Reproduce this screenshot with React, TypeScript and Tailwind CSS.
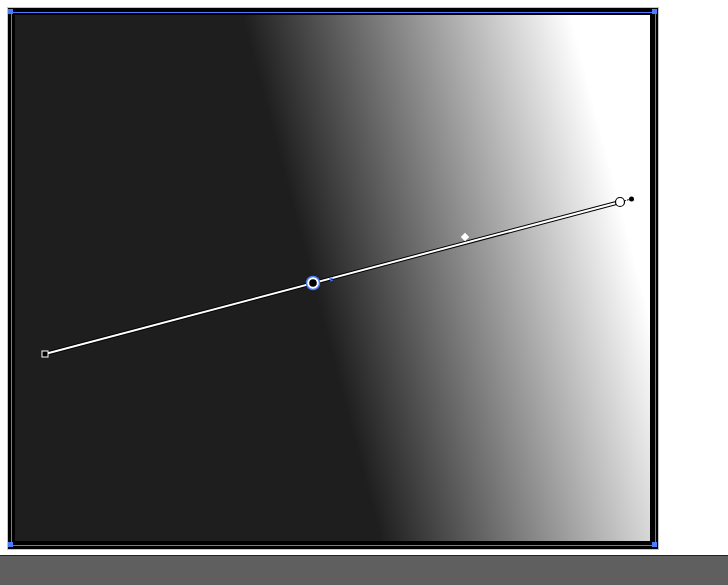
import React from "react";

// Gradient annotator overlay, drawn in page coordinates
const Annotator = () => (
    <svg className="absolute left-0 top-0 pointer-events-none" width={728} height={555} viewBox="0 0 728 555">
        <line x1={45} y1={354} x2={620} y2={202} stroke="#000" strokeWidth={4} />
        <line x1={45} y1={354} x2={620} y2={202} stroke="#fff" strokeWidth={2} />
        <rect x={42} y={351} width={6} height={6} fill="#000" stroke="#fff" strokeWidth={1} />
        <line x1={624} y1={201} x2={631} y2={199} stroke="#000" strokeWidth={1} strokeDasharray="2 1" />
        <circle cx={631.5} cy={199} r={2.5} fill="#000" />
        <circle cx={620} cy={202} r={4.5} fill="#fff" stroke="#000" strokeWidth={1.2} />
        <rect x={462} y={234} width={6} height={6} fill="#fff" transform="rotate(45 465 237)" />
        <circle cx={313} cy={283} r={6.5} fill="#fff" stroke="#4a7cff" strokeWidth={1.5} />
        <circle cx={313} cy={283} r={3.8} fill="#000" />
        <path d="M329 279 L333 278 M330 281 L333 280" stroke="#4a7cff" strokeWidth={1} />
    </svg>
);

export default function App() {
    return (
        <div className="w-[728px] h-[585px] bg-white flex flex-col overflow-hidden" style={{ fontFamily: "'Liberation Sans', sans-serif" }}>
            <div className="relative h-[555px] shrink-0">
                <div className="pt-[7px] pl-[7px]">
                    <div className="w-[652px] h-[543px] border border-[#c4c4c4] bg-black pt-[7px] pl-[7px]">
                        <div className="w-[635px] h-[526px]">
                            <svg width={635} height={526} viewBox="0 0 635 526" className="block">
                                <defs>
                                    <linearGradient id="g" gradientUnits="userSpaceOnUse" x1={30} y1={339} x2={605} y2={187}>
                                        <stop offset="0" stopColor="#1e1e1e" />
                                        <stop offset="0.466" stopColor="#1e1e1e" />
                                        <stop offset="1" stopColor="#ffffff" />
                                    </linearGradient>
                                </defs>
                                <rect width={635} height={526} fill="url(#g)" />
                            </svg>
                        </div>
                    </div>
                </div>

                {/* selection bounds */}
                <div className="absolute left-[11px] top-[12px] w-[645px] h-[534px] border border-[#4a7cff] pointer-events-none" />
                <div className="absolute left-[8px] top-[9px] w-[5px] h-[5px] bg-[#4a7cff]" />
                <div className="absolute left-[652px] top-[9px] w-[5px] h-[5px] bg-[#4a7cff]" />
                <div className="absolute left-[8px] top-[542px] w-[5px] h-[5px] bg-[#4a7cff]" />
                <div className="absolute left-[652px] top-[542px] w-[5px] h-[5px] bg-[#4a7cff]" />

                <Annotator />
            </div>
            <div className="flex-1 bg-[#5f5f5f] border-t border-[#222]" />
        </div>
    );
}
